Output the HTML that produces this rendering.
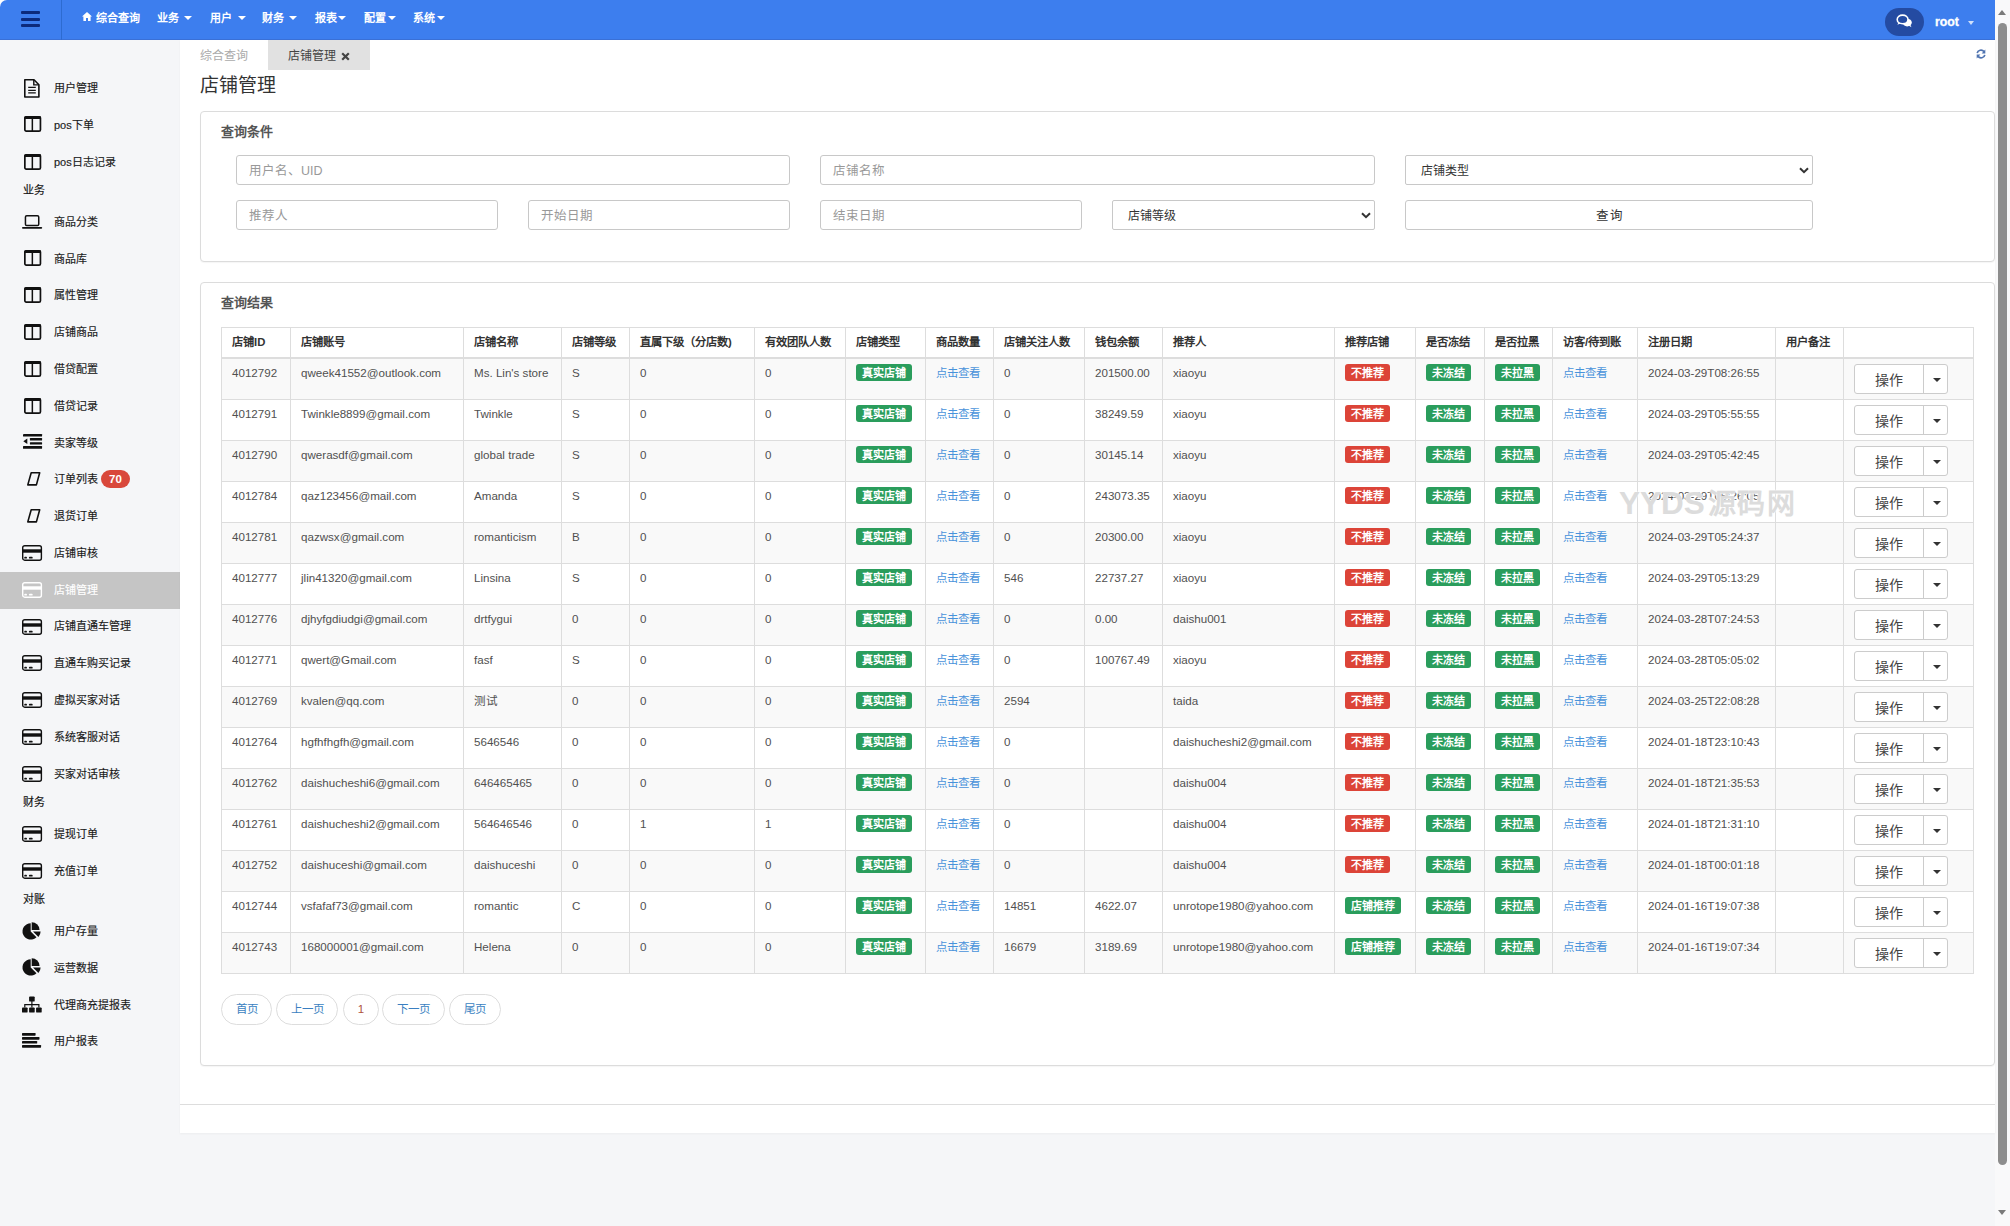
<!DOCTYPE html><html lang="zh-CN"><head><meta charset="utf-8"><title>店铺管理</title><style>
*{box-sizing:border-box}
html,body{margin:0;padding:0}
body{width:2010px;height:1226px;overflow:hidden;position:relative;background:#f5f6f8;font-family:"Liberation Sans", sans-serif;color:#333}
.abs{position:absolute}
.t{position:absolute;white-space:nowrap;line-height:1}
.top{left:0;top:0;width:1995px;height:40px;background:#3d7eee;border-bottom:1px solid #3a70d6}
.nav{color:#fff;font-weight:bold;font-size:11px}
.caret{position:absolute;width:0;height:0;border-left:3.5px solid transparent;border-right:3.5px solid transparent;border-top:4px solid #fff}
.side{left:0;top:40px;width:180px;height:1186px;background:#f5f6f8}
.si{font-size:11px;color:#111;-webkit-text-stroke:0.15px currentColor}
.main{left:180px;top:40px;width:1815px;height:1093px;background:#fff;box-shadow:0 1px 2px rgba(0,0,0,.04)}
.panel{position:absolute;border:1px solid #dcdcdc;border-radius:4px;background:#fff;box-shadow:0 1px 1px rgba(0,0,0,.04)}
.inp{position:absolute;height:30px;border:1px solid #c8c8c8;border-radius:3px;background:#fff}
.ph{position:absolute;left:12px;top:9px;font-size:12.5px;color:#999;line-height:1;white-space:nowrap}
.vl{position:absolute;width:1px;background:#ddd}
.hl{position:absolute;height:1px;background:#ddd}
.cell{position:absolute;font-size:11.6px;color:#505050;line-height:1;white-space:nowrap}
.hd{position:absolute;font-size:11.3px;color:#333;font-weight:bold;line-height:1;white-space:nowrap}
.bdg{position:absolute;height:17px;border-radius:3px;color:#fff;font-weight:bold;font-size:11px;line-height:19px;text-align:center;white-space:nowrap;overflow:hidden}
.g{background:#2a9d5c}
.r{background:#dc4438}
.lnk{position:absolute;font-size:11.5px;color:#4893db;line-height:1;white-space:nowrap}
.btn{position:absolute;height:29px;border:1px solid #ccc;border-radius:3px;background:#fff}
.pg{position:absolute;top:994px;height:31px;border:1px solid #ddd;border-radius:16px;background:#fff;color:#337ab7;font-size:11.5px;text-align:center;line-height:29px}
</style></head><body>
<div class="abs" style="left:0;top:0;width:8px;height:8px;background:#fff"></div>
<div class="abs top" style="border-top-left-radius:7px">
<div class="abs" style="left:61px;top:0;width:1px;height:40px;background:#2d6bd0"></div>
<div class="abs" style="left:21px;top:11px;width:19px;height:3px;background:#0c2a7c;border-radius:1px"></div>
<div class="abs" style="left:21px;top:18px;width:19px;height:3px;background:#0c2a7c;border-radius:1px"></div>
<div class="abs" style="left:21px;top:24px;width:19px;height:3px;background:#0c2a7c;border-radius:1px"></div>
<svg class="abs" style="left:82px;top:12px" width="10" height="9" viewBox="0 0 10 9"><path d="M5 0 L10 4.6 L8.6 4.6 L8.6 9 L6 9 L6 6 L4 6 L4 9 L1.4 9 L1.4 4.6 L0 4.6 Z" fill="#fff"/></svg>
<div class="t nav" style="left:96px;top:12.5px">综合查询</div>
<div class="t nav" style="left:157px;top:12.5px">业务</div>
<div class="caret" style="left:184px;top:16px;border-left-width:4px;border-right-width:4px"></div>
<div class="t nav" style="left:210px;top:12.5px">用户</div>
<div class="caret" style="left:237.5px;top:16px;border-left-width:4px;border-right-width:4px"></div>
<div class="t nav" style="left:262px;top:12.5px">财务</div>
<div class="caret" style="left:289px;top:16px;border-left-width:4px;border-right-width:4px"></div>
<div class="t nav" style="left:315px;top:12.5px">报表</div>
<div class="caret" style="left:338px;top:16px;border-left-width:4px;border-right-width:4px"></div>
<div class="t nav" style="left:364px;top:12.5px">配置</div>
<div class="caret" style="left:388px;top:16px;border-left-width:4px;border-right-width:4px"></div>
<div class="t nav" style="left:413px;top:12.5px">系统</div>
<div class="caret" style="left:437px;top:16px;border-left-width:4px;border-right-width:4px"></div>
<div class="abs" style="left:1885px;top:8px;width:39px;height:28px;border-radius:14px;background:#244ba2"></div>
<svg class="abs" style="left:1896px;top:14px" width="17" height="14" viewBox="0 0 17 14"><ellipse cx="11.2" cy="8.6" rx="4.6" ry="3.9" fill="#fff"/><path d="M12.5 11.5 L15.5 13.2 L14.2 10.5 Z" fill="#fff"/><ellipse cx="6.6" cy="5.4" rx="5.4" ry="4.3" fill="#244ba2" stroke="#fff" stroke-width="1.6"/><path d="M2.6 8.2 L1.4 10.8 L5 9.3" fill="#fff"/></svg>
<div class="t" style="left:1935px;top:15.5px;font-size:12.3px;font-weight:bold;color:#fff;-webkit-text-stroke:0.3px #fff">root</div>
<div class="caret" style="left:1968px;top:21px;border-top-color:#cfe0fb"></div>
</div>
<div class="abs" style="left:1995px;top:0;width:15px;height:1226px;background:#f9f9fa"></div>
<div class="abs" style="left:1998px;top:10px;width:0;height:0;border-left:4.5px solid transparent;border-right:4.5px solid transparent;border-bottom:5px solid #7a7a7a"></div>
<div class="abs" style="left:1998px;top:23px;width:9px;height:1142px;border-radius:4.5px;background:#8d8d8d"></div>
<div class="abs" style="left:1998px;top:1210px;width:0;height:0;border-left:4.5px solid transparent;border-right:4.5px solid transparent;border-top:5px solid #7a7a7a"></div>
<div class="abs side"></div>
<div class="abs" style="left:24.1px;top:78.90px;line-height:0"><svg width="15.7" height="18.8" viewBox="0 0 15.7 18.8" style="display:block;overflow:visible"><path d="M0.8 0.8 H10 L14.9 5.7 V18 H0.8 Z" fill="none" stroke="#111" stroke-width="1.6" stroke-linejoin="round"/><path d="M9.8 1 V5.9 H14.7" fill="none" stroke="#111" stroke-width="1.4"/><path d="M4.2 8.4 H11.8 M4.2 11.4 H11.8 M4.2 13.9 H11.8" stroke="#111" stroke-width="1.2"/></svg></div>
<div class="t si" style="left:54px;top:83.00px;color:#1a1a1a">用户管理</div>
<div class="abs" style="left:23.6px;top:116.48px;line-height:0"><svg width="17.3" height="15.8" viewBox="0 0 17.3 15.8" style="display:block;overflow:visible"><rect x="0.85" y="0.85" width="15.6" height="14.2" rx="1.4" fill="none" stroke="#111" stroke-width="1.7"/><rect x="0.2" y="0.2" width="16.9" height="2.9" rx="1" fill="#111"/><rect x="7.6" y="1" width="1.5" height="14" fill="#111"/></svg></div>
<div class="t si" style="left:54px;top:119.78px;color:#1a1a1a">pos下单</div>
<div class="abs" style="left:23.6px;top:153.66px;line-height:0"><svg width="17.3" height="15.8" viewBox="0 0 17.3 15.8" style="display:block;overflow:visible"><rect x="0.85" y="0.85" width="15.6" height="14.2" rx="1.4" fill="none" stroke="#111" stroke-width="1.7"/><rect x="0.2" y="0.2" width="16.9" height="2.9" rx="1" fill="#111"/><rect x="7.6" y="1" width="1.5" height="14" fill="#111"/></svg></div>
<div class="t si" style="left:54px;top:156.56px;color:#1a1a1a">pos日志记录</div>
<div class="t si" style="left:23px;top:184.51px">业务</div>
<div class="abs" style="left:21.9px;top:214.61px;line-height:0"><svg width="20.2" height="13.6" viewBox="0 0 20.2 13.6" style="display:block;overflow:visible"><rect x="3.45" y="0.75" width="13.3" height="9.8" rx="1.3" fill="none" stroke="#111" stroke-width="1.5"/><rect x="0" y="11.9" width="20.2" height="1.8" rx="0.9" fill="#111"/></svg></div>
<div class="t si" style="left:54px;top:216.86px;color:#1a1a1a">商品分类</div>
<div class="abs" style="left:23.6px;top:250.44px;line-height:0"><svg width="17.3" height="15.8" viewBox="0 0 17.3 15.8" style="display:block;overflow:visible"><rect x="0.85" y="0.85" width="15.6" height="14.2" rx="1.4" fill="none" stroke="#111" stroke-width="1.7"/><rect x="0.2" y="0.2" width="16.9" height="2.9" rx="1" fill="#111"/><rect x="7.6" y="1" width="1.5" height="14" fill="#111"/></svg></div>
<div class="t si" style="left:54px;top:253.64px;color:#1a1a1a">商品库</div>
<div class="abs" style="left:23.6px;top:287.22px;line-height:0"><svg width="17.3" height="15.8" viewBox="0 0 17.3 15.8" style="display:block;overflow:visible"><rect x="0.85" y="0.85" width="15.6" height="14.2" rx="1.4" fill="none" stroke="#111" stroke-width="1.7"/><rect x="0.2" y="0.2" width="16.9" height="2.9" rx="1" fill="#111"/><rect x="7.6" y="1" width="1.5" height="14" fill="#111"/></svg></div>
<div class="t si" style="left:54px;top:290.42px;color:#1a1a1a">属性管理</div>
<div class="abs" style="left:23.6px;top:324.00px;line-height:0"><svg width="17.3" height="15.8" viewBox="0 0 17.3 15.8" style="display:block;overflow:visible"><rect x="0.85" y="0.85" width="15.6" height="14.2" rx="1.4" fill="none" stroke="#111" stroke-width="1.7"/><rect x="0.2" y="0.2" width="16.9" height="2.9" rx="1" fill="#111"/><rect x="7.6" y="1" width="1.5" height="14" fill="#111"/></svg></div>
<div class="t si" style="left:54px;top:327.20px;color:#1a1a1a">店铺商品</div>
<div class="abs" style="left:23.6px;top:360.78px;line-height:0"><svg width="17.3" height="15.8" viewBox="0 0 17.3 15.8" style="display:block;overflow:visible"><rect x="0.85" y="0.85" width="15.6" height="14.2" rx="1.4" fill="none" stroke="#111" stroke-width="1.7"/><rect x="0.2" y="0.2" width="16.9" height="2.9" rx="1" fill="#111"/><rect x="7.6" y="1" width="1.5" height="14" fill="#111"/></svg></div>
<div class="t si" style="left:54px;top:363.98px;color:#1a1a1a">借贷配置</div>
<div class="abs" style="left:23.6px;top:397.56px;line-height:0"><svg width="17.3" height="15.8" viewBox="0 0 17.3 15.8" style="display:block;overflow:visible"><rect x="0.85" y="0.85" width="15.6" height="14.2" rx="1.4" fill="none" stroke="#111" stroke-width="1.7"/><rect x="0.2" y="0.2" width="16.9" height="2.9" rx="1" fill="#111"/><rect x="7.6" y="1" width="1.5" height="14" fill="#111"/></svg></div>
<div class="t si" style="left:54px;top:400.76px;color:#1a1a1a">借贷记录</div>
<div class="abs" style="left:22.5px;top:434.14px;line-height:0"><svg width="19.1" height="14.7" viewBox="0 0 19.1 14.7" style="display:block;overflow:visible"><rect x="0" y="0" width="19.1" height="2.5" rx="0.5" fill="#111"/><rect x="6.9" y="4.1" width="12.2" height="2.5" rx="0.5" fill="#111"/><rect x="6.9" y="8.2" width="12.2" height="2.4" rx="0.5" fill="#111"/><rect x="0" y="12.1" width="19.1" height="2.6" rx="0.5" fill="#111"/><path d="M4.3 4.4 L0.3 7.3 L4.3 10.1 Z" fill="#111"/></svg></div>
<div class="t si" style="left:54px;top:437.54px;color:#1a1a1a">卖家等级</div>
<div class="abs" style="left:27px;top:472.17px;line-height:0"><svg width="13.5" height="13.7" viewBox="0 0 13.5 13.7" style="display:block;overflow:visible"><path d="M4.2 0.8 H12.7 L9.4 12.9 H0.8 Z" fill="none" stroke="#111" stroke-width="1.6" stroke-linejoin="round"/></svg></div>
<div class="t si" style="left:54px;top:474.32px;color:#1a1a1a">订单列表</div>
<div class="abs" style="left:101px;top:469.62px;width:29px;height:18px;border-radius:9px;background:#d9483b;color:#fff;font-weight:bold;font-size:11.5px;line-height:18px;text-align:center">70</div>
<div class="abs" style="left:27px;top:508.95px;line-height:0"><svg width="13.5" height="13.7" viewBox="0 0 13.5 13.7" style="display:block;overflow:visible"><path d="M4.2 0.8 H12.7 L9.4 12.9 H0.8 Z" fill="none" stroke="#111" stroke-width="1.6" stroke-linejoin="round"/></svg></div>
<div class="t si" style="left:54px;top:511.10px;color:#1a1a1a">退货订单</div>
<div class="abs" style="left:22px;top:544.98px;line-height:0"><svg width="20.1" height="15.9" viewBox="0 0 20.1 15.9" style="display:block;overflow:visible"><rect x="0.7" y="0.7" width="18.7" height="14.5" rx="2" fill="none" stroke="#111" stroke-width="1.4"/><rect x="0.7" y="4.3" width="18.7" height="3.4" fill="#111"/><rect x="2.2" y="11.8" width="2.8" height="1.8" rx="0.9" fill="#111"/><rect x="6.9" y="11.8" width="3.8" height="1.8" rx="0.9" fill="#111"/></svg></div>
<div class="t si" style="left:54px;top:547.88px;color:#1a1a1a">店铺审核</div>
<div class="abs" style="left:0;top:572.12px;width:180px;height:36.78px;background:#c5c5c5"></div>
<div class="abs" style="left:22px;top:581.76px;line-height:0"><svg width="20.1" height="15.9" viewBox="0 0 20.1 15.9" style="display:block;overflow:visible"><rect x="0.7" y="0.7" width="18.7" height="14.5" rx="2" fill="none" stroke="#fff" stroke-width="1.4"/><rect x="0.7" y="4.3" width="18.7" height="3.4" fill="#fff"/><rect x="2.2" y="11.8" width="2.8" height="1.8" rx="0.9" fill="#fff"/><rect x="6.9" y="11.8" width="3.8" height="1.8" rx="0.9" fill="#fff"/></svg></div>
<div class="t si" style="left:54px;top:584.66px;color:#fff">店铺管理</div>
<div class="abs" style="left:22px;top:618.54px;line-height:0"><svg width="20.1" height="15.9" viewBox="0 0 20.1 15.9" style="display:block;overflow:visible"><rect x="0.7" y="0.7" width="18.7" height="14.5" rx="2" fill="none" stroke="#111" stroke-width="1.4"/><rect x="0.7" y="4.3" width="18.7" height="3.4" fill="#111"/><rect x="2.2" y="11.8" width="2.8" height="1.8" rx="0.9" fill="#111"/><rect x="6.9" y="11.8" width="3.8" height="1.8" rx="0.9" fill="#111"/></svg></div>
<div class="t si" style="left:54px;top:621.44px;color:#1a1a1a">店铺直通车管理</div>
<div class="abs" style="left:22px;top:655.32px;line-height:0"><svg width="20.1" height="15.9" viewBox="0 0 20.1 15.9" style="display:block;overflow:visible"><rect x="0.7" y="0.7" width="18.7" height="14.5" rx="2" fill="none" stroke="#111" stroke-width="1.4"/><rect x="0.7" y="4.3" width="18.7" height="3.4" fill="#111"/><rect x="2.2" y="11.8" width="2.8" height="1.8" rx="0.9" fill="#111"/><rect x="6.9" y="11.8" width="3.8" height="1.8" rx="0.9" fill="#111"/></svg></div>
<div class="t si" style="left:54px;top:658.22px;color:#1a1a1a">直通车购买记录</div>
<div class="abs" style="left:22px;top:692.10px;line-height:0"><svg width="20.1" height="15.9" viewBox="0 0 20.1 15.9" style="display:block;overflow:visible"><rect x="0.7" y="0.7" width="18.7" height="14.5" rx="2" fill="none" stroke="#111" stroke-width="1.4"/><rect x="0.7" y="4.3" width="18.7" height="3.4" fill="#111"/><rect x="2.2" y="11.8" width="2.8" height="1.8" rx="0.9" fill="#111"/><rect x="6.9" y="11.8" width="3.8" height="1.8" rx="0.9" fill="#111"/></svg></div>
<div class="t si" style="left:54px;top:695.00px;color:#1a1a1a">虚拟买家对话</div>
<div class="abs" style="left:22px;top:728.88px;line-height:0"><svg width="20.1" height="15.9" viewBox="0 0 20.1 15.9" style="display:block;overflow:visible"><rect x="0.7" y="0.7" width="18.7" height="14.5" rx="2" fill="none" stroke="#111" stroke-width="1.4"/><rect x="0.7" y="4.3" width="18.7" height="3.4" fill="#111"/><rect x="2.2" y="11.8" width="2.8" height="1.8" rx="0.9" fill="#111"/><rect x="6.9" y="11.8" width="3.8" height="1.8" rx="0.9" fill="#111"/></svg></div>
<div class="t si" style="left:54px;top:731.78px;color:#1a1a1a">系统客服对话</div>
<div class="abs" style="left:22px;top:765.66px;line-height:0"><svg width="20.1" height="15.9" viewBox="0 0 20.1 15.9" style="display:block;overflow:visible"><rect x="0.7" y="0.7" width="18.7" height="14.5" rx="2" fill="none" stroke="#111" stroke-width="1.4"/><rect x="0.7" y="4.3" width="18.7" height="3.4" fill="#111"/><rect x="2.2" y="11.8" width="2.8" height="1.8" rx="0.9" fill="#111"/><rect x="6.9" y="11.8" width="3.8" height="1.8" rx="0.9" fill="#111"/></svg></div>
<div class="t si" style="left:54px;top:768.56px;color:#1a1a1a">买家对话审核</div>
<div class="t si" style="left:23px;top:796.51px">财务</div>
<div class="abs" style="left:22px;top:825.96px;line-height:0"><svg width="20.1" height="15.9" viewBox="0 0 20.1 15.9" style="display:block;overflow:visible"><rect x="0.7" y="0.7" width="18.7" height="14.5" rx="2" fill="none" stroke="#111" stroke-width="1.4"/><rect x="0.7" y="4.3" width="18.7" height="3.4" fill="#111"/><rect x="2.2" y="11.8" width="2.8" height="1.8" rx="0.9" fill="#111"/><rect x="6.9" y="11.8" width="3.8" height="1.8" rx="0.9" fill="#111"/></svg></div>
<div class="t si" style="left:54px;top:828.86px;color:#1a1a1a">提现订单</div>
<div class="abs" style="left:22px;top:862.74px;line-height:0"><svg width="20.1" height="15.9" viewBox="0 0 20.1 15.9" style="display:block;overflow:visible"><rect x="0.7" y="0.7" width="18.7" height="14.5" rx="2" fill="none" stroke="#111" stroke-width="1.4"/><rect x="0.7" y="4.3" width="18.7" height="3.4" fill="#111"/><rect x="2.2" y="11.8" width="2.8" height="1.8" rx="0.9" fill="#111"/><rect x="6.9" y="11.8" width="3.8" height="1.8" rx="0.9" fill="#111"/></svg></div>
<div class="t si" style="left:54px;top:865.64px;color:#1a1a1a">充值订单</div>
<div class="t si" style="left:23px;top:893.59px">对账</div>
<div class="abs" style="left:22.2px;top:921.64px;line-height:0"><svg width="19" height="17.8" viewBox="0 0 19 17.8" style="display:block;overflow:visible"><path d="M8.7 9.4 L8.7 1.2 A8.2 8.2 0 1 0 14.5 15.2 Z" fill="#111"/><path d="M9.7 8.1 L9.7 0.2 A7.9 7.9 0 0 1 17.6 8.1 Z" fill="#111"/><path d="M11 9.6 L18.6 9.6 A7.6 7.6 0 0 1 16.4 15 Z" fill="#111"/></svg></div>
<div class="t si" style="left:54px;top:925.94px;color:#1a1a1a">用户存量</div>
<div class="abs" style="left:22.2px;top:958.42px;line-height:0"><svg width="19" height="17.8" viewBox="0 0 19 17.8" style="display:block;overflow:visible"><path d="M8.7 9.4 L8.7 1.2 A8.2 8.2 0 1 0 14.5 15.2 Z" fill="#111"/><path d="M9.7 8.1 L9.7 0.2 A7.9 7.9 0 0 1 17.6 8.1 Z" fill="#111"/><path d="M11 9.6 L18.6 9.6 A7.6 7.6 0 0 1 16.4 15 Z" fill="#111"/></svg></div>
<div class="t si" style="left:54px;top:962.72px;color:#1a1a1a">运营数据</div>
<div class="abs" style="left:22.2px;top:995.60px;line-height:0"><svg width="19.7" height="16.6" viewBox="0 0 19.7 16.6" style="display:block;overflow:visible"><rect x="7.1" y="0.4" width="5.6" height="5.2" rx="0.9" fill="#111"/><rect x="0" y="11.4" width="5.6" height="5.2" rx="0.9" fill="#111"/><rect x="7.1" y="11.4" width="5.6" height="5.2" rx="0.9" fill="#111"/><rect x="14.1" y="11.4" width="5.6" height="5.2" rx="0.9" fill="#111"/><path d="M9.9 5 V11.6 M2.8 11.6 V8.7 H16.9 V11.6" fill="none" stroke="#111" stroke-width="1.2"/></svg></div>
<div class="t si" style="left:54px;top:999.50px;color:#1a1a1a">代理商充提报表</div>
<div class="abs" style="left:22.4px;top:1032.93px;line-height:0"><svg width="19.1" height="14.7" viewBox="0 0 19.1 14.7" style="display:block;overflow:visible"><rect x="0" y="0" width="13.6" height="2.7" rx="0.6" fill="#111"/><rect x="0" y="4" width="17.5" height="2.7" rx="0.6" fill="#111"/><rect x="0" y="7.9" width="15.2" height="2.7" rx="0.6" fill="#111"/><rect x="0" y="12" width="19.1" height="2.7" rx="0.6" fill="#111"/></svg></div>
<div class="t si" style="left:54px;top:1036.28px;color:#1a1a1a">用户报表</div>
<div class="abs main"></div>
<div class="abs" style="left:268px;top:40px;width:102px;height:30px;background:#e1e1e1"></div>
<div class="t" style="left:200px;top:50px;font-size:12px;color:#aaa">综合查询</div>
<div class="t" style="left:288px;top:50px;font-size:12px;color:#444">店铺管理</div>
<svg class="abs" style="left:341px;top:52px" width="9" height="9" viewBox="0 0 9 9"><path d="M1.2 1.2 L7.8 7.8 M7.8 1.2 L1.2 7.8" stroke="#444" stroke-width="2.2"/></svg>
<svg class="abs" style="left:1975.5px;top:49px" width="10" height="10" viewBox="0 0 10 10"><path d="M1.2 4.2 A3.8 3.6 0 0 1 8 2.6" fill="none" stroke="#4f73b0" stroke-width="1.7"/><path d="M9.3 0.6 L9.3 4.4 L5.6 4.4 Z" fill="#4f73b0"/><path d="M8.8 5.8 A3.8 3.6 0 0 1 2 7.4" fill="none" stroke="#4f73b0" stroke-width="1.7"/><path d="M0.7 9.4 L0.7 5.6 L4.4 5.6 Z" fill="#4f73b0"/></svg>
<div class="t" style="left:200px;top:76px;font-size:19px;color:#333">店铺管理</div>
<div class="panel" style="left:200px;top:111px;width:1795px;height:151px"></div>
<div class="t" style="left:221px;top:125px;font-size:13px;font-weight:bold;color:#555">查询条件</div>
<div class="inp" style="left:236px;top:155px;width:554px;border-radius:3px"><div class="ph" style="color:#999;left:12px;">用户名、UID</div></div>
<div class="inp" style="left:820px;top:155px;width:555px;border-radius:3px"><div class="ph" style="color:#999;left:12px;">店铺名称</div></div>
<div class="inp" style="left:1405px;top:155px;width:408px;border-radius:2px"><div class="ph" style="color:#333;left:15px;font-size:12px;top:9.3px">店铺类型</div><svg class="abs" style="left:393px;top:11px" width="10" height="7" viewBox="0 0 10 7"><path d="M1 1.2 L5 5.2 L9 1.2" fill="none" stroke="#333" stroke-width="2"/></svg></div>
<div class="inp" style="left:236px;top:200px;width:262px;border-radius:3px"><div class="ph" style="color:#999;left:12px;">推荐人</div></div>
<div class="inp" style="left:528px;top:200px;width:262px;border-radius:3px"><div class="ph" style="color:#999;left:12px;">开始日期</div></div>
<div class="inp" style="left:820px;top:200px;width:262px;border-radius:3px"><div class="ph" style="color:#999;left:12px;">结束日期</div></div>
<div class="inp" style="left:1112px;top:200px;width:263px;border-radius:2px"><div class="ph" style="color:#333;left:15px;font-size:12px;top:9.3px">店铺等级</div><svg class="abs" style="left:248px;top:11px" width="10" height="7" viewBox="0 0 10 7"><path d="M1 1.2 L5 5.2 L9 1.2" fill="none" stroke="#333" stroke-width="2"/></svg></div>
<div class="inp" style="left:1405px;top:200px;width:408px;text-align:center"><div class="t" style="left:189.5px;top:9px;font-size:12.5px;letter-spacing:1.5px;color:#333">查询</div></div>
<div class="panel" style="left:200px;top:282px;width:1795px;height:784px"></div>
<div class="t" style="left:221px;top:296px;font-size:13px;font-weight:bold;color:#555">查询结果</div>
<div class="abs" style="left:222px;top:359px;width:1751px;height:40px;background:#f9f9f9"></div>
<div class="abs" style="left:222px;top:441px;width:1751px;height:40px;background:#f9f9f9"></div>
<div class="abs" style="left:222px;top:523px;width:1751px;height:40px;background:#f9f9f9"></div>
<div class="abs" style="left:222px;top:605px;width:1751px;height:40px;background:#f9f9f9"></div>
<div class="abs" style="left:222px;top:687px;width:1751px;height:40px;background:#f9f9f9"></div>
<div class="abs" style="left:222px;top:769px;width:1751px;height:40px;background:#f9f9f9"></div>
<div class="abs" style="left:222px;top:851px;width:1751px;height:40px;background:#f9f9f9"></div>
<div class="abs" style="left:222px;top:933px;width:1751px;height:40px;background:#f9f9f9"></div>
<div class="hl" style="left:221px;top:327px;width:1753px"></div>
<div class="hl" style="left:221px;top:357px;width:1753px;height:2px"></div>
<div class="hl" style="left:221px;top:399px;width:1753px"></div>
<div class="hl" style="left:221px;top:440px;width:1753px"></div>
<div class="hl" style="left:221px;top:481px;width:1753px"></div>
<div class="hl" style="left:221px;top:522px;width:1753px"></div>
<div class="hl" style="left:221px;top:563px;width:1753px"></div>
<div class="hl" style="left:221px;top:604px;width:1753px"></div>
<div class="hl" style="left:221px;top:645px;width:1753px"></div>
<div class="hl" style="left:221px;top:686px;width:1753px"></div>
<div class="hl" style="left:221px;top:727px;width:1753px"></div>
<div class="hl" style="left:221px;top:768px;width:1753px"></div>
<div class="hl" style="left:221px;top:809px;width:1753px"></div>
<div class="hl" style="left:221px;top:850px;width:1753px"></div>
<div class="hl" style="left:221px;top:891px;width:1753px"></div>
<div class="hl" style="left:221px;top:932px;width:1753px"></div>
<div class="hl" style="left:221px;top:973px;width:1753px"></div>
<div class="vl" style="left:221px;top:327px;height:647px"></div>
<div class="vl" style="left:290px;top:327px;height:647px"></div>
<div class="vl" style="left:463px;top:327px;height:647px"></div>
<div class="vl" style="left:561px;top:327px;height:647px"></div>
<div class="vl" style="left:629px;top:327px;height:647px"></div>
<div class="vl" style="left:754px;top:327px;height:647px"></div>
<div class="vl" style="left:845px;top:327px;height:647px"></div>
<div class="vl" style="left:925px;top:327px;height:647px"></div>
<div class="vl" style="left:993px;top:327px;height:647px"></div>
<div class="vl" style="left:1084px;top:327px;height:647px"></div>
<div class="vl" style="left:1162px;top:327px;height:647px"></div>
<div class="vl" style="left:1334px;top:327px;height:647px"></div>
<div class="vl" style="left:1415px;top:327px;height:647px"></div>
<div class="vl" style="left:1484px;top:327px;height:647px"></div>
<div class="vl" style="left:1552px;top:327px;height:647px"></div>
<div class="vl" style="left:1637px;top:327px;height:647px"></div>
<div class="vl" style="left:1775px;top:327px;height:647px"></div>
<div class="vl" style="left:1843px;top:327px;height:647px"></div>
<div class="vl" style="left:1973px;top:327px;height:647px"></div>
<div class="hd" style="left:232px;top:337px">店铺ID</div>
<div class="hd" style="left:301px;top:337px">店铺账号</div>
<div class="hd" style="left:474px;top:337px">店铺名称</div>
<div class="hd" style="left:572px;top:337px">店铺等级</div>
<div class="hd" style="left:640px;top:337px">直属下级（分店数)</div>
<div class="hd" style="left:765px;top:337px">有效团队人数</div>
<div class="hd" style="left:856px;top:337px">店铺类型</div>
<div class="hd" style="left:936px;top:337px">商品数量</div>
<div class="hd" style="left:1004px;top:337px">店铺关注人数</div>
<div class="hd" style="left:1095px;top:337px">钱包余额</div>
<div class="hd" style="left:1173px;top:337px">推荐人</div>
<div class="hd" style="left:1345px;top:337px">推荐店铺</div>
<div class="hd" style="left:1426px;top:337px">是否冻结</div>
<div class="hd" style="left:1495px;top:337px">是否拉黑</div>
<div class="hd" style="left:1563px;top:337px">访客/待到账</div>
<div class="hd" style="left:1648px;top:337px">注册日期</div>
<div class="hd" style="left:1786px;top:337px">用户备注</div>
<div class="cell" style="left:232px;top:366.7px">4012792</div>
<div class="cell" style="left:301px;top:366.7px">qweek41552@outlook.com</div>
<div class="cell" style="left:474px;top:366.7px">Ms. Lin&#x27;s store</div>
<div class="cell" style="left:572px;top:366.7px">S</div>
<div class="cell" style="left:640px;top:366.7px">0</div>
<div class="cell" style="left:765px;top:366.7px">0</div>
<div class="cell" style="left:1004px;top:366.7px">0</div>
<div class="cell" style="left:1095px;top:366.7px">201500.00</div>
<div class="cell" style="left:1173px;top:366.7px">xiaoyu</div>
<div class="cell" style="left:1648px;top:366.7px">2024-03-29T08:26:55</div>
<div class="bdg g" style="left:856px;top:364px;width:56px">真实店铺</div>
<div class="lnk" style="left:936px;top:367.9px">点击查看</div>
<div class="bdg r" style="left:1345px;top:364px;width:45px">不推荐</div>
<div class="bdg g" style="left:1426px;top:364px;width:45px">未冻结</div>
<div class="bdg g" style="left:1495px;top:364px;width:45px">未拉黑</div>
<div class="lnk" style="left:1563px;top:367.9px">点击查看</div>
<div class="btn" style="left:1854px;top:364px;width:94px;height:30px"><div class="abs" style="left:67.5px;top:0;width:1px;height:28px;background:#ccc"></div><div class="t" style="left:19.5px;top:7.5px;font-size:14px;color:#444">操作</div><div class="caret" style="left:77.5px;top:12.5px;border-top:4.5px solid #333;border-left-width:4px;border-right-width:4px"></div></div>
<div class="cell" style="left:232px;top:407.7px">4012791</div>
<div class="cell" style="left:301px;top:407.7px">Twinkle8899@gmail.com</div>
<div class="cell" style="left:474px;top:407.7px">Twinkle</div>
<div class="cell" style="left:572px;top:407.7px">S</div>
<div class="cell" style="left:640px;top:407.7px">0</div>
<div class="cell" style="left:765px;top:407.7px">0</div>
<div class="cell" style="left:1004px;top:407.7px">0</div>
<div class="cell" style="left:1095px;top:407.7px">38249.59</div>
<div class="cell" style="left:1173px;top:407.7px">xiaoyu</div>
<div class="cell" style="left:1648px;top:407.7px">2024-03-29T05:55:55</div>
<div class="bdg g" style="left:856px;top:405px;width:56px">真实店铺</div>
<div class="lnk" style="left:936px;top:408.9px">点击查看</div>
<div class="bdg r" style="left:1345px;top:405px;width:45px">不推荐</div>
<div class="bdg g" style="left:1426px;top:405px;width:45px">未冻结</div>
<div class="bdg g" style="left:1495px;top:405px;width:45px">未拉黑</div>
<div class="lnk" style="left:1563px;top:408.9px">点击查看</div>
<div class="btn" style="left:1854px;top:405px;width:94px;height:30px"><div class="abs" style="left:67.5px;top:0;width:1px;height:28px;background:#ccc"></div><div class="t" style="left:19.5px;top:7.5px;font-size:14px;color:#444">操作</div><div class="caret" style="left:77.5px;top:12.5px;border-top:4.5px solid #333;border-left-width:4px;border-right-width:4px"></div></div>
<div class="cell" style="left:232px;top:448.7px">4012790</div>
<div class="cell" style="left:301px;top:448.7px">qwerasdf@gmail.com</div>
<div class="cell" style="left:474px;top:448.7px">global trade</div>
<div class="cell" style="left:572px;top:448.7px">S</div>
<div class="cell" style="left:640px;top:448.7px">0</div>
<div class="cell" style="left:765px;top:448.7px">0</div>
<div class="cell" style="left:1004px;top:448.7px">0</div>
<div class="cell" style="left:1095px;top:448.7px">30145.14</div>
<div class="cell" style="left:1173px;top:448.7px">xiaoyu</div>
<div class="cell" style="left:1648px;top:448.7px">2024-03-29T05:42:45</div>
<div class="bdg g" style="left:856px;top:446px;width:56px">真实店铺</div>
<div class="lnk" style="left:936px;top:449.9px">点击查看</div>
<div class="bdg r" style="left:1345px;top:446px;width:45px">不推荐</div>
<div class="bdg g" style="left:1426px;top:446px;width:45px">未冻结</div>
<div class="bdg g" style="left:1495px;top:446px;width:45px">未拉黑</div>
<div class="lnk" style="left:1563px;top:449.9px">点击查看</div>
<div class="btn" style="left:1854px;top:446px;width:94px;height:30px"><div class="abs" style="left:67.5px;top:0;width:1px;height:28px;background:#ccc"></div><div class="t" style="left:19.5px;top:7.5px;font-size:14px;color:#444">操作</div><div class="caret" style="left:77.5px;top:12.5px;border-top:4.5px solid #333;border-left-width:4px;border-right-width:4px"></div></div>
<div class="cell" style="left:232px;top:489.7px">4012784</div>
<div class="cell" style="left:301px;top:489.7px">qaz123456@mail.com</div>
<div class="cell" style="left:474px;top:489.7px">Amanda</div>
<div class="cell" style="left:572px;top:489.7px">S</div>
<div class="cell" style="left:640px;top:489.7px">0</div>
<div class="cell" style="left:765px;top:489.7px">0</div>
<div class="cell" style="left:1004px;top:489.7px">0</div>
<div class="cell" style="left:1095px;top:489.7px">243073.35</div>
<div class="cell" style="left:1173px;top:489.7px">xiaoyu</div>
<div class="cell" style="left:1648px;top:489.7px">2024-03-29T05:26:05</div>
<div class="bdg g" style="left:856px;top:487px;width:56px">真实店铺</div>
<div class="lnk" style="left:936px;top:490.9px">点击查看</div>
<div class="bdg r" style="left:1345px;top:487px;width:45px">不推荐</div>
<div class="bdg g" style="left:1426px;top:487px;width:45px">未冻结</div>
<div class="bdg g" style="left:1495px;top:487px;width:45px">未拉黑</div>
<div class="lnk" style="left:1563px;top:490.9px">点击查看</div>
<div class="btn" style="left:1854px;top:487px;width:94px;height:30px"><div class="abs" style="left:67.5px;top:0;width:1px;height:28px;background:#ccc"></div><div class="t" style="left:19.5px;top:7.5px;font-size:14px;color:#444">操作</div><div class="caret" style="left:77.5px;top:12.5px;border-top:4.5px solid #333;border-left-width:4px;border-right-width:4px"></div></div>
<div class="cell" style="left:232px;top:530.7px">4012781</div>
<div class="cell" style="left:301px;top:530.7px">qazwsx@gmail.com</div>
<div class="cell" style="left:474px;top:530.7px">romanticism</div>
<div class="cell" style="left:572px;top:530.7px">B</div>
<div class="cell" style="left:640px;top:530.7px">0</div>
<div class="cell" style="left:765px;top:530.7px">0</div>
<div class="cell" style="left:1004px;top:530.7px">0</div>
<div class="cell" style="left:1095px;top:530.7px">20300.00</div>
<div class="cell" style="left:1173px;top:530.7px">xiaoyu</div>
<div class="cell" style="left:1648px;top:530.7px">2024-03-29T05:24:37</div>
<div class="bdg g" style="left:856px;top:528px;width:56px">真实店铺</div>
<div class="lnk" style="left:936px;top:531.9px">点击查看</div>
<div class="bdg r" style="left:1345px;top:528px;width:45px">不推荐</div>
<div class="bdg g" style="left:1426px;top:528px;width:45px">未冻结</div>
<div class="bdg g" style="left:1495px;top:528px;width:45px">未拉黑</div>
<div class="lnk" style="left:1563px;top:531.9px">点击查看</div>
<div class="btn" style="left:1854px;top:528px;width:94px;height:30px"><div class="abs" style="left:67.5px;top:0;width:1px;height:28px;background:#ccc"></div><div class="t" style="left:19.5px;top:7.5px;font-size:14px;color:#444">操作</div><div class="caret" style="left:77.5px;top:12.5px;border-top:4.5px solid #333;border-left-width:4px;border-right-width:4px"></div></div>
<div class="cell" style="left:232px;top:571.7px">4012777</div>
<div class="cell" style="left:301px;top:571.7px">jlin41320@gmail.com</div>
<div class="cell" style="left:474px;top:571.7px">Linsina</div>
<div class="cell" style="left:572px;top:571.7px">S</div>
<div class="cell" style="left:640px;top:571.7px">0</div>
<div class="cell" style="left:765px;top:571.7px">0</div>
<div class="cell" style="left:1004px;top:571.7px">546</div>
<div class="cell" style="left:1095px;top:571.7px">22737.27</div>
<div class="cell" style="left:1173px;top:571.7px">xiaoyu</div>
<div class="cell" style="left:1648px;top:571.7px">2024-03-29T05:13:29</div>
<div class="bdg g" style="left:856px;top:569px;width:56px">真实店铺</div>
<div class="lnk" style="left:936px;top:572.9px">点击查看</div>
<div class="bdg r" style="left:1345px;top:569px;width:45px">不推荐</div>
<div class="bdg g" style="left:1426px;top:569px;width:45px">未冻结</div>
<div class="bdg g" style="left:1495px;top:569px;width:45px">未拉黑</div>
<div class="lnk" style="left:1563px;top:572.9px">点击查看</div>
<div class="btn" style="left:1854px;top:569px;width:94px;height:30px"><div class="abs" style="left:67.5px;top:0;width:1px;height:28px;background:#ccc"></div><div class="t" style="left:19.5px;top:7.5px;font-size:14px;color:#444">操作</div><div class="caret" style="left:77.5px;top:12.5px;border-top:4.5px solid #333;border-left-width:4px;border-right-width:4px"></div></div>
<div class="cell" style="left:232px;top:612.7px">4012776</div>
<div class="cell" style="left:301px;top:612.7px">djhyfgdiudgi@gmail.com</div>
<div class="cell" style="left:474px;top:612.7px">drtfygui</div>
<div class="cell" style="left:572px;top:612.7px">0</div>
<div class="cell" style="left:640px;top:612.7px">0</div>
<div class="cell" style="left:765px;top:612.7px">0</div>
<div class="cell" style="left:1004px;top:612.7px">0</div>
<div class="cell" style="left:1095px;top:612.7px">0.00</div>
<div class="cell" style="left:1173px;top:612.7px">daishu001</div>
<div class="cell" style="left:1648px;top:612.7px">2024-03-28T07:24:53</div>
<div class="bdg g" style="left:856px;top:610px;width:56px">真实店铺</div>
<div class="lnk" style="left:936px;top:613.9px">点击查看</div>
<div class="bdg r" style="left:1345px;top:610px;width:45px">不推荐</div>
<div class="bdg g" style="left:1426px;top:610px;width:45px">未冻结</div>
<div class="bdg g" style="left:1495px;top:610px;width:45px">未拉黑</div>
<div class="lnk" style="left:1563px;top:613.9px">点击查看</div>
<div class="btn" style="left:1854px;top:610px;width:94px;height:30px"><div class="abs" style="left:67.5px;top:0;width:1px;height:28px;background:#ccc"></div><div class="t" style="left:19.5px;top:7.5px;font-size:14px;color:#444">操作</div><div class="caret" style="left:77.5px;top:12.5px;border-top:4.5px solid #333;border-left-width:4px;border-right-width:4px"></div></div>
<div class="cell" style="left:232px;top:653.7px">4012771</div>
<div class="cell" style="left:301px;top:653.7px">qwert@Gmail.com</div>
<div class="cell" style="left:474px;top:653.7px">fasf</div>
<div class="cell" style="left:572px;top:653.7px">S</div>
<div class="cell" style="left:640px;top:653.7px">0</div>
<div class="cell" style="left:765px;top:653.7px">0</div>
<div class="cell" style="left:1004px;top:653.7px">0</div>
<div class="cell" style="left:1095px;top:653.7px">100767.49</div>
<div class="cell" style="left:1173px;top:653.7px">xiaoyu</div>
<div class="cell" style="left:1648px;top:653.7px">2024-03-28T05:05:02</div>
<div class="bdg g" style="left:856px;top:651px;width:56px">真实店铺</div>
<div class="lnk" style="left:936px;top:654.9px">点击查看</div>
<div class="bdg r" style="left:1345px;top:651px;width:45px">不推荐</div>
<div class="bdg g" style="left:1426px;top:651px;width:45px">未冻结</div>
<div class="bdg g" style="left:1495px;top:651px;width:45px">未拉黑</div>
<div class="lnk" style="left:1563px;top:654.9px">点击查看</div>
<div class="btn" style="left:1854px;top:651px;width:94px;height:30px"><div class="abs" style="left:67.5px;top:0;width:1px;height:28px;background:#ccc"></div><div class="t" style="left:19.5px;top:7.5px;font-size:14px;color:#444">操作</div><div class="caret" style="left:77.5px;top:12.5px;border-top:4.5px solid #333;border-left-width:4px;border-right-width:4px"></div></div>
<div class="cell" style="left:232px;top:694.7px">4012769</div>
<div class="cell" style="left:301px;top:694.7px">kvalen@qq.com</div>
<div class="cell" style="left:474px;top:694.7px">测试</div>
<div class="cell" style="left:572px;top:694.7px">0</div>
<div class="cell" style="left:640px;top:694.7px">0</div>
<div class="cell" style="left:765px;top:694.7px">0</div>
<div class="cell" style="left:1004px;top:694.7px">2594</div>
<div class="cell" style="left:1173px;top:694.7px">taida</div>
<div class="cell" style="left:1648px;top:694.7px">2024-03-25T22:08:28</div>
<div class="bdg g" style="left:856px;top:692px;width:56px">真实店铺</div>
<div class="lnk" style="left:936px;top:695.9px">点击查看</div>
<div class="bdg r" style="left:1345px;top:692px;width:45px">不推荐</div>
<div class="bdg g" style="left:1426px;top:692px;width:45px">未冻结</div>
<div class="bdg g" style="left:1495px;top:692px;width:45px">未拉黑</div>
<div class="lnk" style="left:1563px;top:695.9px">点击查看</div>
<div class="btn" style="left:1854px;top:692px;width:94px;height:30px"><div class="abs" style="left:67.5px;top:0;width:1px;height:28px;background:#ccc"></div><div class="t" style="left:19.5px;top:7.5px;font-size:14px;color:#444">操作</div><div class="caret" style="left:77.5px;top:12.5px;border-top:4.5px solid #333;border-left-width:4px;border-right-width:4px"></div></div>
<div class="cell" style="left:232px;top:735.7px">4012764</div>
<div class="cell" style="left:301px;top:735.7px">hgfhfhgfh@gmail.com</div>
<div class="cell" style="left:474px;top:735.7px">5646546</div>
<div class="cell" style="left:572px;top:735.7px">0</div>
<div class="cell" style="left:640px;top:735.7px">0</div>
<div class="cell" style="left:765px;top:735.7px">0</div>
<div class="cell" style="left:1004px;top:735.7px">0</div>
<div class="cell" style="left:1173px;top:735.7px">daishucheshi2@gmail.com</div>
<div class="cell" style="left:1648px;top:735.7px">2024-01-18T23:10:43</div>
<div class="bdg g" style="left:856px;top:733px;width:56px">真实店铺</div>
<div class="lnk" style="left:936px;top:736.9px">点击查看</div>
<div class="bdg r" style="left:1345px;top:733px;width:45px">不推荐</div>
<div class="bdg g" style="left:1426px;top:733px;width:45px">未冻结</div>
<div class="bdg g" style="left:1495px;top:733px;width:45px">未拉黑</div>
<div class="lnk" style="left:1563px;top:736.9px">点击查看</div>
<div class="btn" style="left:1854px;top:733px;width:94px;height:30px"><div class="abs" style="left:67.5px;top:0;width:1px;height:28px;background:#ccc"></div><div class="t" style="left:19.5px;top:7.5px;font-size:14px;color:#444">操作</div><div class="caret" style="left:77.5px;top:12.5px;border-top:4.5px solid #333;border-left-width:4px;border-right-width:4px"></div></div>
<div class="cell" style="left:232px;top:776.7px">4012762</div>
<div class="cell" style="left:301px;top:776.7px">daishucheshi6@gmail.com</div>
<div class="cell" style="left:474px;top:776.7px">646465465</div>
<div class="cell" style="left:572px;top:776.7px">0</div>
<div class="cell" style="left:640px;top:776.7px">0</div>
<div class="cell" style="left:765px;top:776.7px">0</div>
<div class="cell" style="left:1004px;top:776.7px">0</div>
<div class="cell" style="left:1173px;top:776.7px">daishu004</div>
<div class="cell" style="left:1648px;top:776.7px">2024-01-18T21:35:53</div>
<div class="bdg g" style="left:856px;top:774px;width:56px">真实店铺</div>
<div class="lnk" style="left:936px;top:777.9px">点击查看</div>
<div class="bdg r" style="left:1345px;top:774px;width:45px">不推荐</div>
<div class="bdg g" style="left:1426px;top:774px;width:45px">未冻结</div>
<div class="bdg g" style="left:1495px;top:774px;width:45px">未拉黑</div>
<div class="lnk" style="left:1563px;top:777.9px">点击查看</div>
<div class="btn" style="left:1854px;top:774px;width:94px;height:30px"><div class="abs" style="left:67.5px;top:0;width:1px;height:28px;background:#ccc"></div><div class="t" style="left:19.5px;top:7.5px;font-size:14px;color:#444">操作</div><div class="caret" style="left:77.5px;top:12.5px;border-top:4.5px solid #333;border-left-width:4px;border-right-width:4px"></div></div>
<div class="cell" style="left:232px;top:817.7px">4012761</div>
<div class="cell" style="left:301px;top:817.7px">daishucheshi2@gmail.com</div>
<div class="cell" style="left:474px;top:817.7px">564646546</div>
<div class="cell" style="left:572px;top:817.7px">0</div>
<div class="cell" style="left:640px;top:817.7px">1</div>
<div class="cell" style="left:765px;top:817.7px">1</div>
<div class="cell" style="left:1004px;top:817.7px">0</div>
<div class="cell" style="left:1173px;top:817.7px">daishu004</div>
<div class="cell" style="left:1648px;top:817.7px">2024-01-18T21:31:10</div>
<div class="bdg g" style="left:856px;top:815px;width:56px">真实店铺</div>
<div class="lnk" style="left:936px;top:818.9px">点击查看</div>
<div class="bdg r" style="left:1345px;top:815px;width:45px">不推荐</div>
<div class="bdg g" style="left:1426px;top:815px;width:45px">未冻结</div>
<div class="bdg g" style="left:1495px;top:815px;width:45px">未拉黑</div>
<div class="lnk" style="left:1563px;top:818.9px">点击查看</div>
<div class="btn" style="left:1854px;top:815px;width:94px;height:30px"><div class="abs" style="left:67.5px;top:0;width:1px;height:28px;background:#ccc"></div><div class="t" style="left:19.5px;top:7.5px;font-size:14px;color:#444">操作</div><div class="caret" style="left:77.5px;top:12.5px;border-top:4.5px solid #333;border-left-width:4px;border-right-width:4px"></div></div>
<div class="cell" style="left:232px;top:858.7px">4012752</div>
<div class="cell" style="left:301px;top:858.7px">daishuceshi@gmail.com</div>
<div class="cell" style="left:474px;top:858.7px">daishuceshi</div>
<div class="cell" style="left:572px;top:858.7px">0</div>
<div class="cell" style="left:640px;top:858.7px">0</div>
<div class="cell" style="left:765px;top:858.7px">0</div>
<div class="cell" style="left:1004px;top:858.7px">0</div>
<div class="cell" style="left:1173px;top:858.7px">daishu004</div>
<div class="cell" style="left:1648px;top:858.7px">2024-01-18T00:01:18</div>
<div class="bdg g" style="left:856px;top:856px;width:56px">真实店铺</div>
<div class="lnk" style="left:936px;top:859.9px">点击查看</div>
<div class="bdg r" style="left:1345px;top:856px;width:45px">不推荐</div>
<div class="bdg g" style="left:1426px;top:856px;width:45px">未冻结</div>
<div class="bdg g" style="left:1495px;top:856px;width:45px">未拉黑</div>
<div class="lnk" style="left:1563px;top:859.9px">点击查看</div>
<div class="btn" style="left:1854px;top:856px;width:94px;height:30px"><div class="abs" style="left:67.5px;top:0;width:1px;height:28px;background:#ccc"></div><div class="t" style="left:19.5px;top:7.5px;font-size:14px;color:#444">操作</div><div class="caret" style="left:77.5px;top:12.5px;border-top:4.5px solid #333;border-left-width:4px;border-right-width:4px"></div></div>
<div class="cell" style="left:232px;top:899.7px">4012744</div>
<div class="cell" style="left:301px;top:899.7px">vsfafaf73@gmail.com</div>
<div class="cell" style="left:474px;top:899.7px">romantic</div>
<div class="cell" style="left:572px;top:899.7px">C</div>
<div class="cell" style="left:640px;top:899.7px">0</div>
<div class="cell" style="left:765px;top:899.7px">0</div>
<div class="cell" style="left:1004px;top:899.7px">14851</div>
<div class="cell" style="left:1095px;top:899.7px">4622.07</div>
<div class="cell" style="left:1173px;top:899.7px">unrotope1980@yahoo.com</div>
<div class="cell" style="left:1648px;top:899.7px">2024-01-16T19:07:38</div>
<div class="bdg g" style="left:856px;top:897px;width:56px">真实店铺</div>
<div class="lnk" style="left:936px;top:900.9px">点击查看</div>
<div class="bdg g" style="left:1345px;top:897px;width:56px">店铺推荐</div>
<div class="bdg g" style="left:1426px;top:897px;width:45px">未冻结</div>
<div class="bdg g" style="left:1495px;top:897px;width:45px">未拉黑</div>
<div class="lnk" style="left:1563px;top:900.9px">点击查看</div>
<div class="btn" style="left:1854px;top:897px;width:94px;height:30px"><div class="abs" style="left:67.5px;top:0;width:1px;height:28px;background:#ccc"></div><div class="t" style="left:19.5px;top:7.5px;font-size:14px;color:#444">操作</div><div class="caret" style="left:77.5px;top:12.5px;border-top:4.5px solid #333;border-left-width:4px;border-right-width:4px"></div></div>
<div class="cell" style="left:232px;top:940.7px">4012743</div>
<div class="cell" style="left:301px;top:940.7px">168000001@gmail.com</div>
<div class="cell" style="left:474px;top:940.7px">Helena</div>
<div class="cell" style="left:572px;top:940.7px">0</div>
<div class="cell" style="left:640px;top:940.7px">0</div>
<div class="cell" style="left:765px;top:940.7px">0</div>
<div class="cell" style="left:1004px;top:940.7px">16679</div>
<div class="cell" style="left:1095px;top:940.7px">3189.69</div>
<div class="cell" style="left:1173px;top:940.7px">unrotope1980@yahoo.com</div>
<div class="cell" style="left:1648px;top:940.7px">2024-01-16T19:07:34</div>
<div class="bdg g" style="left:856px;top:938px;width:56px">真实店铺</div>
<div class="lnk" style="left:936px;top:941.9px">点击查看</div>
<div class="bdg g" style="left:1345px;top:938px;width:56px">店铺推荐</div>
<div class="bdg g" style="left:1426px;top:938px;width:45px">未冻结</div>
<div class="bdg g" style="left:1495px;top:938px;width:45px">未拉黑</div>
<div class="lnk" style="left:1563px;top:941.9px">点击查看</div>
<div class="btn" style="left:1854px;top:938px;width:94px;height:30px"><div class="abs" style="left:67.5px;top:0;width:1px;height:28px;background:#ccc"></div><div class="t" style="left:19.5px;top:7.5px;font-size:14px;color:#444">操作</div><div class="caret" style="left:77.5px;top:12.5px;border-top:4.5px solid #333;border-left-width:4px;border-right-width:4px"></div></div>
<div class="t" style="left:1619px;top:487.7px;font-size:31.5px;font-weight:bold;color:#dcdcdc;text-shadow:0 0 1.5px #fff,0 0 1.5px #fff">YYDS<span style="font-size:28px;letter-spacing:1.5px;margin-left:3px">源码网</span></div>
<div class="pg" style="left:221px;width:51px;color:#3a7fc1">首页</div>
<div class="pg" style="left:276px;width:62px;color:#3a7fc1">上一页</div>
<div class="pg" style="left:343px;width:36px;color:#b0523c">1</div>
<div class="pg" style="left:382px;width:63px;color:#3a7fc1">下一页</div>
<div class="pg" style="left:449px;width:52px;color:#3a7fc1">尾页</div>
<div class="abs" style="left:180px;top:1104px;width:1815px;height:1px;background:#ddd"></div>
</body></html>
